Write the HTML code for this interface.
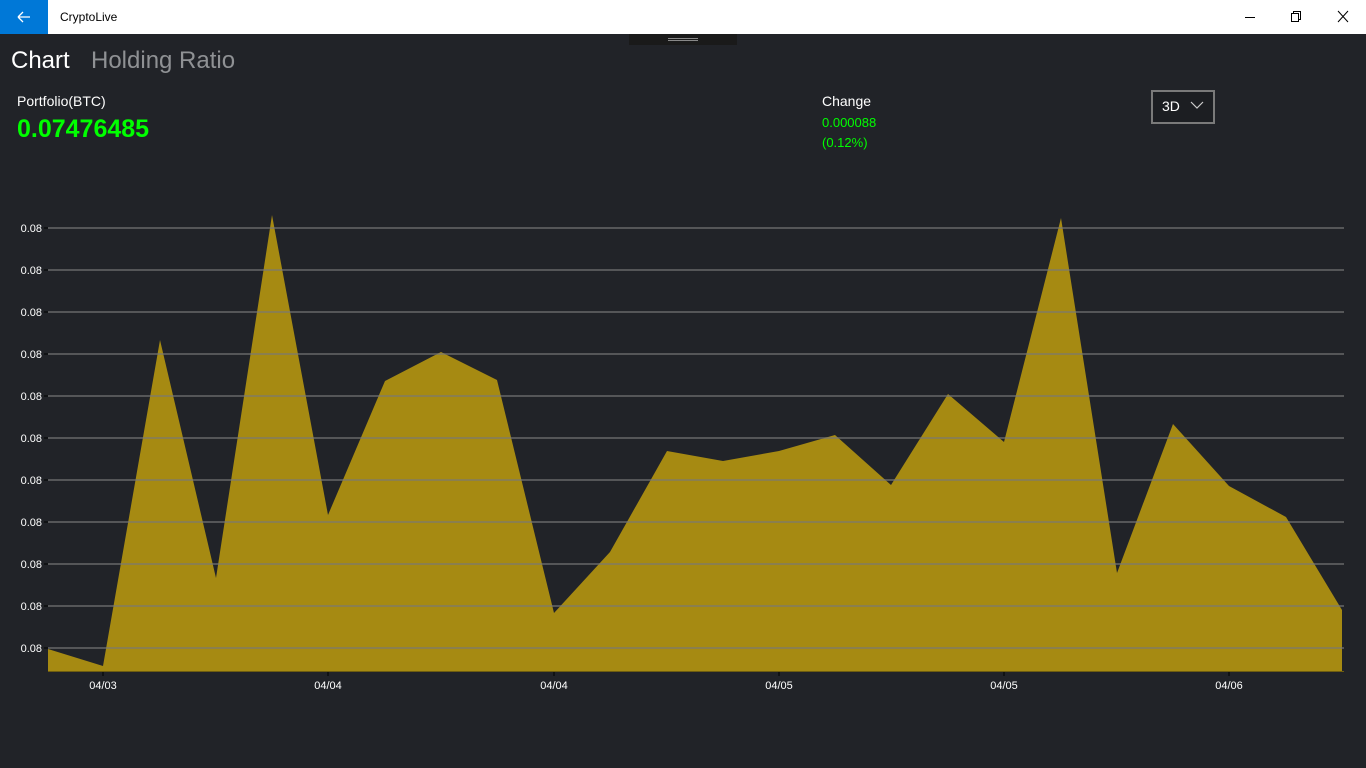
<!DOCTYPE html>
<html><head><meta charset="utf-8">
<style>
*{margin:0;padding:0;box-sizing:border-box}
body{width:1366px;height:768px;background:#212328;font-family:"Liberation Sans","DejaVu Sans",sans-serif;overflow:hidden;position:relative;color:#fff}
.tb{position:absolute;left:0;top:0;width:1366px;height:34px;background:#fff}
.back{position:absolute;left:0;top:0;width:48px;height:34px;background:#0078d7}
.title{position:absolute;left:60px;top:10px;font-size:12px;color:#000}
.t{position:absolute;white-space:nowrap}
</style></head><body>
<div class="tb">
<div class="back"><svg width="48" height="34"><path d="M18 17h12M18 17l5-5M18 17l5 5" stroke="#fff" stroke-width="1.3" fill="none"/></svg></div>
<div class="title">CryptoLive</div>
<svg style="position:absolute;left:1240px;top:0" width="126" height="34">
<path d="M5 17.5h10" stroke="#000" stroke-width="1"/>
<rect x="51.5" y="13.5" width="7" height="8" stroke="#000" fill="none"/><path d="M53.5 13.5v-2h7v8h-2" stroke="#000" fill="none"/>
<path d="M98 11l10 11M108 11l-10 11" stroke="#000" stroke-width="1"/>
</svg>
</div>
<div style="position:absolute;left:629px;top:34px;width:108px;height:11px;background:#1a1a1a"></div>
<div style="position:absolute;left:668px;top:38px;width:30px;height:1px;background:#888"></div>
<div style="position:absolute;left:668px;top:40px;width:30px;height:1px;background:#888"></div>
<div class="t" style="left:11px;top:47px;font-size:24px;color:#fff">Chart</div>
<div class="t" style="left:91px;top:47px;font-size:24px;color:#8f9194">Holding Ratio</div>
<div class="t" style="left:17px;top:93px;font-size:14px">Portfolio(BTC)</div>
<div class="t" style="left:17px;top:115px;font-size:25px;font-weight:bold;color:#00ff00">0.07476485</div>
<div class="t" style="left:822px;top:93px;font-size:14px">Change</div>
<div class="t" style="left:822px;top:115px;font-size:13px;color:#00ff00">0.000088</div>
<div class="t" style="left:822px;top:135px;font-size:13px;color:#00ff00">(0.12%)</div>
<div style="position:absolute;left:1151px;top:90px;width:64px;height:34px;border:2px solid #7a7a7a;background:#1c1e22"></div>
<div class="t" style="left:1162px;top:98px;font-size:14px">3D</div>
<svg style="position:absolute;left:1190px;top:100px" width="14" height="10"><path d="M1 2l6 6 6-6" stroke="#ccc" stroke-width="1.2" fill="none"/></svg>
<svg style="position:absolute;left:0;top:0" width="1366" height="768">
<polygon fill="#a68a12" points="48,649 103,666 160,340 216,578 272,215 328,515 385,381 441,352 497,380 554,613 610,552 667,451 723,461 779,451 835,435 891,485 948,394 1004,442 1061,218 1117,573 1173,424 1229,486 1286,517 1342,610 1342,671 48,671"/>
<g stroke="rgba(120,120,120,0.6)" stroke-width="2">
<path d="M48 228H1344M48 270H1344M48 312H1344M48 354H1344M48 396H1344M48 438H1344M48 480H1344M48 522H1344M48 564H1344M48 606H1344M48 648H1344"/>
</g>
<g stroke="#000" stroke-width="1"><path d="M44 228h4M44 270h4M44 312h4M44 354h4M44 396h4M44 438h4M44 480h4M44 522h4M44 564h4M44 606h4M44 648h4"/>
<path d="M103 671v5M328 671v5M554 671v5M779 671v5M1004 671v5M1229 671v5"/></g>
<path d="M48 671.5H1344" stroke="#6e5d10" stroke-width="1"/>
<g fill="#fff" font-size="11" font-family="Liberation Sans, sans-serif" text-anchor="end">
<text x="42" y="232">0.08</text><text x="42" y="274">0.08</text><text x="42" y="316">0.08</text><text x="42" y="358">0.08</text><text x="42" y="400">0.08</text><text x="42" y="442">0.08</text><text x="42" y="484">0.08</text><text x="42" y="526">0.08</text><text x="42" y="568">0.08</text><text x="42" y="610">0.08</text><text x="42" y="652">0.08</text>
</g>
<g fill="#fff" font-size="11" font-family="Liberation Sans, sans-serif" text-anchor="middle">
<text x="103" y="689">04/03</text><text x="328" y="689">04/04</text><text x="554" y="689">04/04</text><text x="779" y="689">04/05</text><text x="1004" y="689">04/05</text><text x="1229" y="689">04/06</text>
</g>
</svg>
</body></html>
